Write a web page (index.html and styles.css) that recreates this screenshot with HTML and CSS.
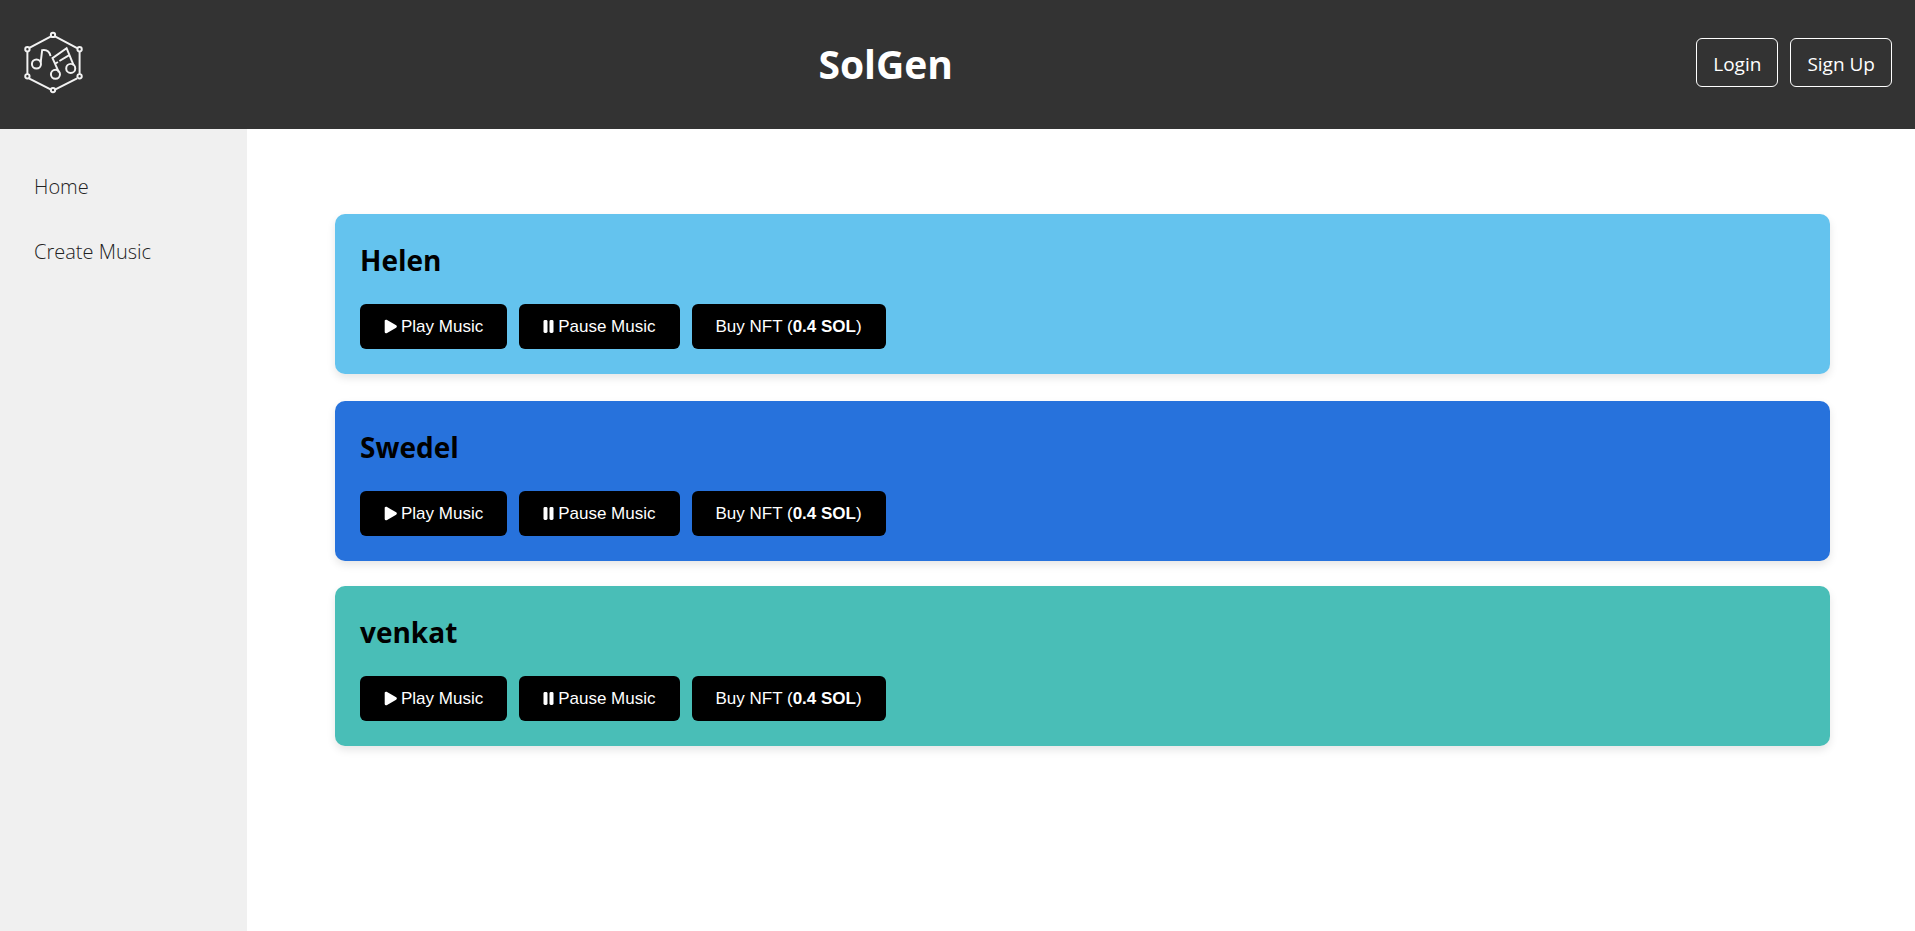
FILE: index.html
```html
<!DOCTYPE html>
<html lang="en">
<head>
<meta charset="utf-8">
<title>SolGen</title>
<link rel="stylesheet" href="styles.css">
</head>
<body>
<svg class="sprite" aria-hidden="true">
  <symbol id="play" viewBox="0 0 13 16"><path d="M2 2v11l9.500-5.500z" fill="currentColor" stroke="currentColor" stroke-width="2.600" stroke-linejoin="round"/></symbol>
  <symbol id="pause" viewBox="0 0 11 16"><rect x="0.500" y="1" width="4" height="13" rx="1.400" fill="currentColor"/><rect x="6.500" y="1" width="4" height="13" rx="1.400" fill="currentColor"/></symbol>
</svg>
<header class="header">
  <svg class="logo" viewBox="0 0 60 66" role="img" aria-label="SolGen logo" fill="none" stroke="#f2f2f2" stroke-width="2">
    <path d="M5.500 18.500 28 6.500M32 6.500 54.500 18.500M57 22v23M54.500 49 32 60.500M28 60.500 5.500 49M4 45V22"/>
    <circle cx="30" cy="5" r="2.200"/><circle cx="57" cy="19.500" r="2.200"/><circle cx="57" cy="47" r="2.200"/>
    <circle cx="30" cy="61" r="2.200"/><circle cx="4" cy="47" r="2.200"/><circle cx="4" cy="19.500" r="2.200"/>
    <circle cx="13.200" cy="34.500" r="4.600"/><circle cx="32.500" cy="45" r="4.600"/><circle cx="48" cy="39" r="4.600"/>
    <path d="M17.500 33 19 20.500q7-1 8.500 6M36 43 29.500 28.500 43.800 18.500 51 36M32.500 34l2.500-1.500M36.500 31.500 46.500 25.500"/>
  </svg>
  <h1 class="brand">SolGen</h1>
  <div class="account">
    <button class="account-button" type="button">Login</button>
    <button class="account-button" type="button">Sign Up</button>
  </div>
</header>
<div class="layout">
  <nav class="sidebar">
    <a class="nav-link" href="#">Home</a>
    <a class="nav-link" href="#">Create Music</a>
  </nav>
  <main class="content">
    <article class="card card-sky">
      <h2 class="card-title">Helen</h2>
      <div class="actions">
        <button class="action" type="button"><svg class="icon-play"><use href="#play"/></svg>Play Music</button>
        <button class="action" type="button"><svg class="icon-pause"><use href="#pause"/></svg>Pause Music</button>
        <button class="action" type="button"><span>Buy NFT (<b>0.4 SOL</b>)</span></button>
      </div>
    </article>
    <article class="card card-blue">
      <h2 class="card-title">Swedel</h2>
      <div class="actions">
        <button class="action" type="button"><svg class="icon-play"><use href="#play"/></svg>Play Music</button>
        <button class="action" type="button"><svg class="icon-pause"><use href="#pause"/></svg>Pause Music</button>
        <button class="action" type="button"><span>Buy NFT (<b>0.4 SOL</b>)</span></button>
      </div>
    </article>
    <article class="card card-teal">
      <h2 class="card-title">venkat</h2>
      <div class="actions">
        <button class="action" type="button"><svg class="icon-play"><use href="#play"/></svg>Play Music</button>
        <button class="action" type="button"><svg class="icon-pause"><use href="#pause"/></svg>Pause Music</button>
        <button class="action" type="button"><span>Buy NFT (<b>0.4 SOL</b>)</span></button>
      </div>
    </article>
  </main>
</div>
</body>
</html>
```
FILE: styles.css
```css
* {
  box-sizing: border-box;
}

body {
  margin: 0;
  min-height: 100vh;
  display: flex;
  flex-direction: column;
  background: #fff;
  color: #000;
  font-family: "Segoe UI", "Open Sans", "Noto Sans", sans-serif;
}

.sprite {
  display: none;
}

.header {
  display: flex;
  justify-content: space-between;
  align-items: center;
  padding: 30px 23px 34px;
  background: #333;
  color: #fff;
}

.logo {
  width: 60px;
  height: 65px;
}

.brand {
  margin: 0;
  padding: 3px 8px 0 0;
  font-size: 39px;
  line-height: 62px;
}

.account {
  display: flex;
  gap: 12px;
}

.account-button {
  height: 49px;
  padding: 2px 16px 0;
  border: 1px solid #fff;
  border-radius: 6px;
  background: transparent;
  color: #fff;
  font: 19px/28px "Segoe UI", "Open Sans", "Noto Sans", sans-serif;
}

.layout {
  flex: 1;
  display: flex;
}

.sidebar {
  width: 247px;
  flex-shrink: 0;
  display: flex;
  flex-direction: column;
  gap: 35px;
  padding: 43px 34px;
  background: #f0f0f0;
}

.nav-link {
  color: #222;
  font-size: 20px;
  font-weight: 300;
  line-height: 30px;
  text-decoration: none;
}

.content {
  flex: 1;
  display: flex;
  flex-direction: column;
  gap: 25px;
  padding: 85px 85px 85px 88px;
}

.card {
  padding: 25px;
  border-radius: 10px;
  box-shadow: 0 4px 8px rgba(0, 0, 0, 0.1);
}

.card-sky {
  margin-bottom: 2px;
  background: #64c3ee;
}

.card-blue {
  background: #2772dc;
}

.card-teal {
  background: #49beb7;
}

.card-title {
  margin: 0 0 22px;
  font-size: 28px;
  line-height: 43px;
}

.actions {
  display: flex;
  gap: 12px;
}

.action {
  display: flex;
  align-items: center;
  gap: 4px;
  height: 45px;
  padding: 0 24px;
  border: 0;
  border-radius: 6px;
  background: #000;
  color: #fff;
  font: 17px/20px "Liberation Sans", Arial, sans-serif;
}

.icon-play {
  width: 13px;
  height: 16px;
}

.icon-pause {
  width: 11px;
  height: 16px;
}
```
